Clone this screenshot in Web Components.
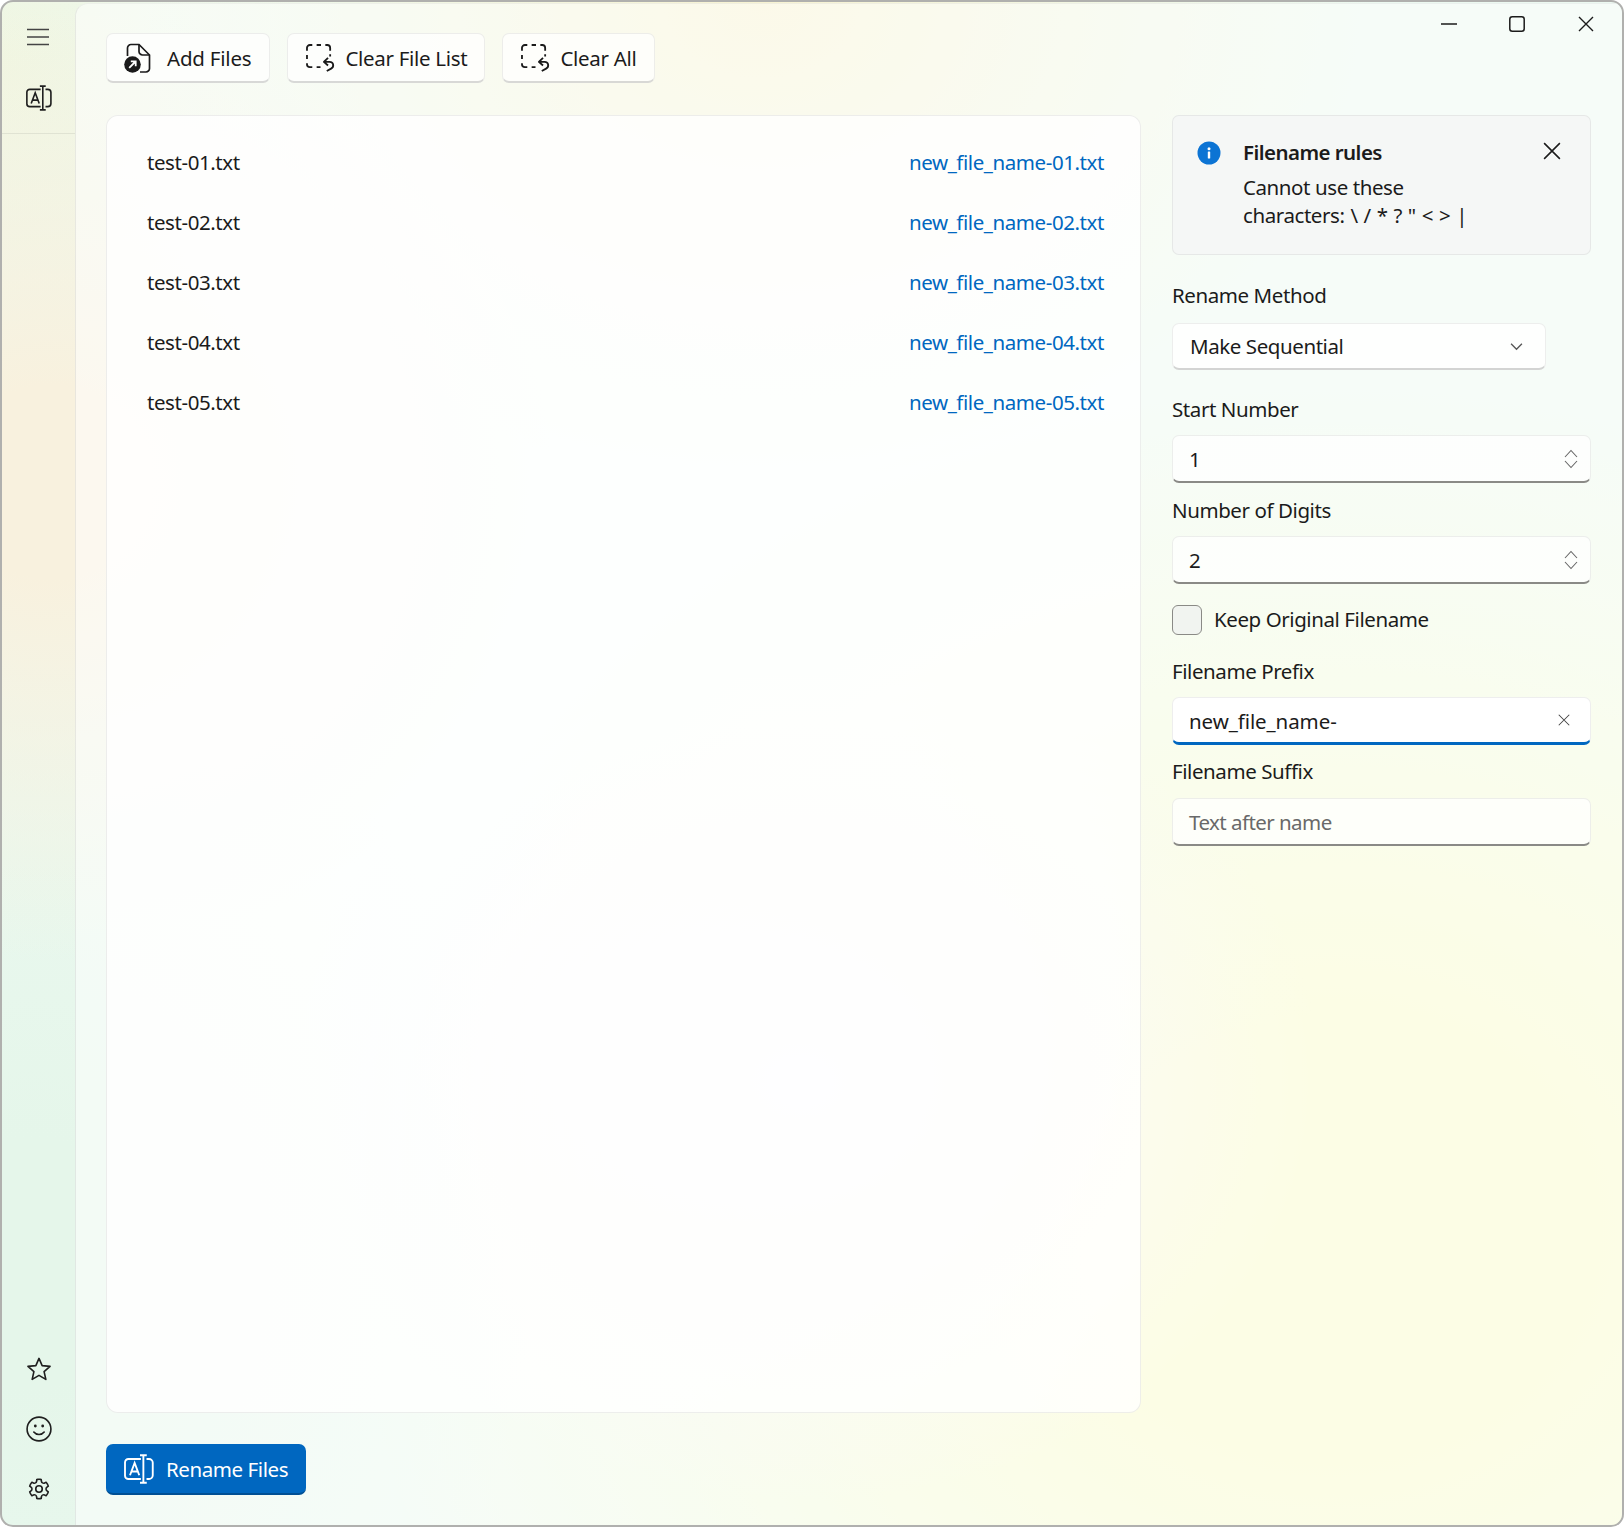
<!DOCTYPE html>
<html lang="en">
<head>
<meta charset="utf-8">
<title>File Renamer</title>
<style>
html,body{margin:0;padding:0;background:#fff;}
body{width:1624px;height:1527px;overflow:hidden;font-family:"Noto Sans","Open Sans",sans-serif;font-size:20.5px;color:#1b1b1b;letter-spacing:-.42px;white-space:nowrap;}
</style>
</head>
<body>
<app-window>
  <side-nav slot="nav">
    <nav-item icon="menu" slot="top" size="24"></nav-item>
    <nav-item icon="rename" slot="top" size="26" style="margin-left:1px"></nav-item>
    <nav-item icon="star" slot="bottom" size="26" style="margin-left:1px"></nav-item>
    <nav-item icon="smile" slot="bottom" size="26" style="margin-left:1px"></nav-item>
    <nav-item icon="gear" slot="bottom" size="26" style="margin-left:1px"></nav-item>
  </side-nav>
  <caption-buttons slot="caption"></caption-buttons>
  <tool-bar slot="toolbar">
    <action-button icon="addfile">Add Files</action-button>
    <action-button icon="clear">Clear File List</action-button>
    <action-button icon="clear">Clear All</action-button>
  </tool-bar>
  <file-list slot="list">
    <file-row><span>test-01.txt</span><span slot="new">new_file_name-01.txt</span></file-row>
    <file-row><span>test-02.txt</span><span slot="new">new_file_name-02.txt</span></file-row>
    <file-row><span>test-03.txt</span><span slot="new">new_file_name-03.txt</span></file-row>
    <file-row><span>test-04.txt</span><span slot="new">new_file_name-04.txt</span></file-row>
    <file-row><span>test-05.txt</span><span slot="new">new_file_name-05.txt</span></file-row>
  </file-list>
  <side-panel slot="panel">
    <info-bar>
      <span slot="title">Filename rules</span>
      <div>Cannot use these</div>
      <div style="word-spacing:1px">characters: \ / * ? " &lt; &gt; |</div>
    </info-bar>
    <form-field style="margin-top:28px;--gap:14px"><span slot="label">Rename Method</span>
      <combo-box>Make Sequential</combo-box></form-field>
    <form-field style="margin-top:27px;--gap:12px"><span slot="label">Start Number</span>
      <input-box kind="spin">1</input-box></form-field>
    <form-field style="margin-top:15px;--gap:12px"><span slot="label">Number of Digits</span>
      <input-box kind="spin">2</input-box></form-field>
    <check-box style="margin-top:21px">Keep Original Filename</check-box>
    <form-field style="margin-top:24px;--gap:12px"><span slot="label">Filename Prefix</span>
      <input-box kind="clear" focused>new_file_name-</input-box></form-field>
    <form-field style="margin-top:14px;--gap:13px"><span slot="label">Filename Suffix</span>
      <input-box placeholder>Text after name</input-box></form-field>
  </side-panel>
  <primary-button slot="footer">Rename Files</primary-button>
</app-window>
<script>
const ICONS={
menu:['0 0 24 24','<path d="M1 4.5H23M1 12H23M1 19.5H23" fill="none" stroke="#444" stroke-width="1.6"/>'],
rename:['0 0 24 24','<g fill="none" stroke="currentColor" stroke-width="1.5"><path d="M13.5 4H3.5a2.7 2.7 0 0 0-2.7 2.7V17.3A2.7 2.7 0 0 0 3.5 20H13.5"/><path d="M18 4H20a3 3 0 0 1 3 3V17a3 3 0 0 1-3 3H18"/><path d="M12.8 1H18.2M15.5 1V23M12.8 23H18.2"/><path d="M4.8 17L8.5 7.2L12.2 17M6.1 14H10.9"/></g>'],
star:['0 0 24 24','<path d="M12 2.2L14.9 8.9L22.2 9.6L16.7 14.4L18.3 21.6L12 17.9L5.7 21.6L7.3 14.4L1.800 9.6L9.100 8.900Z" fill="none" stroke="currentColor" stroke-width="1.5" stroke-linejoin="round"/>'],
smile:['0 0 24 24','<g fill="none" stroke="currentColor" stroke-width="1.5"><circle cx="12" cy="12" r="11"/><path d="M7.200 14.800C9.500 17.800 14.500 17.800 16.800 14.800" stroke-linecap="round"/></g><circle cx="8.600" cy="9.200" r="1.300" fill="currentColor"/><circle cx="15.400" cy="9.200" r="1.300" fill="currentColor"/>'],
gear:['0 0 24 24','<path fill="currentColor" d="M12.012 2.25c.734.008 1.465.093 2.182.253a.75.75 0 0 1 .582.649l.17 1.527a1.384 1.384 0 0 0 1.927 1.116l1.4-.615a.75.75 0 0 1 .85.174 9.793 9.793 0 0 1 2.205 3.792.75.75 0 0 1-.272.825l-1.241.916a1.38 1.38 0 0 0 0 2.226l1.243.915a.75.75 0 0 1 .272.826 9.798 9.798 0 0 1-2.204 3.792.75.75 0 0 1-.849.175l-1.406-.617a1.38 1.38 0 0 0-1.926 1.114l-.17 1.526a.75.75 0 0 1-.571.647 9.518 9.518 0 0 1-4.406 0 .75.75 0 0 1-.572-.647l-.169-1.524a1.382 1.382 0 0 0-1.925-1.11l-1.406.616a.75.75 0 0 1-.85-.175 9.798 9.798 0 0 1-2.203-3.796.75.75 0 0 1 .272-.826l1.243-.916a1.38 1.38 0 0 0 0-2.226l-1.243-.914a.75.75 0 0 1-.272-.826 9.793 9.793 0 0 1 2.205-3.792.75.75 0 0 1 .85-.174l1.4.615a1.387 1.387 0 0 0 1.93-1.118l.17-1.526a.75.75 0 0 1 .583-.65c.718-.159 1.45-.243 2.202-.252Zm0 1.5a9.135 9.135 0 0 0-1.355.117l-.109.977A2.886 2.886 0 0 1 6.525 7.17l-.898-.394a8.293 8.293 0 0 0-1.348 2.317l.798.587a2.881 2.881 0 0 1 0 4.643l-.799.588c.32.842.776 1.626 1.348 2.322l.905-.397a2.882 2.882 0 0 1 4.017 2.318l.11.984c.889.15 1.798.15 2.687 0l.11-.984a2.881 2.881 0 0 1 4.018-2.322l.905.396a8.296 8.296 0 0 0 1.347-2.318l-.798-.588a2.881 2.881 0 0 1 0-4.643l.796-.587a8.293 8.293 0 0 0-1.348-2.317l-.896.393a2.884 2.884 0 0 1-4.023-2.324l-.11-.976a8.988 8.988 0 0 0-1.333-.117ZM12 8.25a3.75 3.75 0 1 1 0 7.5 3.75 3.75 0 0 1 0-7.5Zm0 1.5a2.25 2.25 0 1 0 0 4.5 2.25 2.25 0 0 0 0-4.500Z"/>'],
addfile:['0 0 27 30','<path d="M3.500 13V5a3.500 3.500 0 0 1 3.500-3.500H15L25.500 12V25.500a3.500 3.500 0 0 1-3.500 3.500H16" fill="none" stroke="currentColor" stroke-width="1.7"/><path d="M15 1.500V8.500a3.500 3.500 0 0 0 3.500 3.500H25.500" fill="none" stroke="currentColor" stroke-width="1.7"/><circle cx="8.500" cy="21.500" r="8.300" fill="currentColor"/><path d="M5.200 24.800L11.500 18.500M6.800 18.300H11.700V23.200" fill="none" stroke="#fff" stroke-width="1.800"/>'],
clear:['0 0 30 29','<g fill="none" stroke="currentColor" stroke-width="1.900"><path d="M1 7V4a3 3 0 0 1 3-3H6.500M11 1H15.500M20 1H22a3 3 0 0 1 3 3V7M1 11.500V15.500M1 20V21a3 3 0 0 0 3 3H6.500M11 24H15M25 10.500V13"/><path d="M22.800 14.300L18.500 18.500L22.800 22.300M18.500 18.500H24.500C28.800 18.500 29.300 23.800 26 25.500L21.500 28" stroke-linejoin="round"/></g>'],
info:['0 0 24 24','<circle cx="12" cy="12" r="11.500" fill="#0c74d4"/><rect x="10.800" y="10.500" width="2.400" height="7" rx=".6" fill="#fff"/><circle cx="12" cy="7.800" r="1.500" fill="#fff"/>'],
x:['0 0 16 16','<path d="M1 1L15 15M15 1L1 15" fill="none" stroke="currentColor" stroke-width="1.400"/>'],
chev:['0 0 12 8','<path d="M1 1.500L6 6.500L11 1.500" fill="none" stroke="#555" stroke-width="1.200"/>'],
spin:['0 0 14 20','<path d="M1 8L7 1.500L13 8M1 12L7 18.500L13 12" fill="none" stroke="#666" stroke-width="1.100"/>']
};
function svg(name,w,h){const[v,b]=ICONS[name];return `<svg xmlns="http://www.w3.org/2000/svg" viewBox="${v}" width="${w}" height="${h||w}" style="display:block;flex:none">${b}</svg>`}
function comp(tag,build){customElements.define(tag,class extends HTMLElement{constructor(){super();this.attachShadow({mode:'open'})}connectedCallback(){this.shadowRoot.innerHTML=build(this)}})}

comp('app-window',()=>`<style>
:host{display:block;box-sizing:border-box;width:1624px;height:1527px;border:2.500px solid #b0b0ae;border-radius:13px;overflow:hidden;position:relative;
background:
 radial-gradient(520px 420px at 800px 1080px,#f6f2fa 0,rgba(246,242,250,0) 100%),
 radial-gradient(620px 480px at 760px 0px,#f8f3d2 0,rgba(248,243,210,0) 100%),
 radial-gradient(500px 480px at 50px 480px,#f8f1de 0,#f8f1de 20%,rgba(248,241,222,0) 100%),
 radial-gradient(300px 320px at 0px 60px,#f0f6e2 0,rgba(240,246,226,0) 100%),
 radial-gradient(500px 620px at 30px 1260px,#e5f6ea 0,#e5f6ea 20%,rgba(229,246,234,0) 100%),
 radial-gradient(1000px 860px at 1330px 1230px,#f9fbc8 0,#f9fbc8 25%,rgba(249,251,200,0) 100%),
 #ecf9f1;
display:grid;grid-template-columns:72.500px 1fr;}
.main{background:rgba(255,255,255,.52);border-left:1.500px solid rgba(0,0,0,.07);border-top:1.500px solid rgba(0,0,0,.04);border-top-left-radius:13px;
 padding:29px 30px 30px 30.500px;display:flex;flex-direction:column;min-height:0;box-sizing:border-box;position:relative;margin-top:1px}
.content{flex:1;display:grid;grid-template-columns:1035px 419px;column-gap:31px;margin-top:32px;min-height:0}
.footer{margin-top:31px;display:flex}
.cap{position:absolute;top:0;right:2px}
</style>
<slot name="nav"></slot>
<div class="main">
 <div class="cap"><slot name="caption"></slot></div>
 <slot name="toolbar"></slot>
 <div class="content"><slot name="list"></slot><slot name="panel"></slot></div>
 <div class="footer"><slot name="footer"></slot></div>
</div>`);

comp('side-nav',()=>`<style>
:host{display:flex;flex-direction:column;height:100%;color:#1f1f1f}
.top{display:flex;flex-direction:column;align-items:center;gap:36px;padding:22px 0 23px;border-bottom:1.500px solid rgba(0,0,0,.07)}
.sp{flex:1}
.bot{display:flex;flex-direction:column;align-items:center;gap:35px;padding-bottom:23.500px}
</style>
<div class="top"><slot name="top"></slot></div><div class="sp"></div><div class="bot"><slot name="bottom"></slot></div>`);

comp('nav-item',h=>`<style>:host{display:flex;align-items:center;justify-content:center;width:26px;height:25px}</style>${svg(h.getAttribute('icon'),+h.getAttribute('size'))}`);

comp('caption-buttons',()=>`<style>
:host{display:flex;color:#1b1b1b}
.b{width:68.500px;height:39px;display:flex;align-items:center;justify-content:center}
</style>
<div class="b"><svg width="16" height="16" viewBox="0 0 16 16"><path d="M0 8H16" stroke="currentColor" stroke-width="1.500"/></svg></div>
<div class="b"><svg width="16" height="16" viewBox="0 0 16 16"><rect x=".8" y=".8" width="14.400" height="14.400" rx="2.500" fill="none" stroke="currentColor" stroke-width="1.500"/></svg></div>
<div class="b">${svg('x',16)}</div>`);

comp('tool-bar',()=>`<style>:host{display:flex;gap:17px;height:50px}</style><slot></slot>`);

comp('action-button',h=>{const ic=h.getAttribute('icon');const add=ic==='addfile';return `<style>
:host{display:flex;align-items:center;box-sizing:border-box;height:50px;background:rgba(255,255,255,.72);border:1.500px solid rgba(0,0,0,.065);border-bottom:2.500px solid rgba(0,0,0,.15);border-radius:7px;padding:0 ${add?18:17}px 0 ${add?17:18}px;gap:${add?16:10}px;color:#1b1b1b;letter-spacing:${add?'-.2px':'-.3px'}}
</style>${add?svg('addfile',27,30):svg('clear',29,28)}<slot></slot>`});

comp('file-list',()=>`<style>
:host{display:block;box-sizing:border-box;background:rgba(255,255,255,.78);border:1.500px solid rgba(0,0,0,.065);border-radius:12px;padding:16px 36px 0 40px;min-height:0}
</style><slot></slot>`);

comp('file-row',()=>`<style>
:host{display:flex;justify-content:space-between;align-items:center;height:60px;color:#1b1b1b}
.n{color:#0067c0}
</style><div><slot></slot></div><div class="n"><slot name="new"></slot></div>`);

comp('side-panel',()=>`<style>:host{display:flex;flex-direction:column;min-height:0}</style><slot></slot>`);

comp('info-bar',()=>`<style>
:host{display:grid;grid-template-columns:24px 1fr 18px;column-gap:22px;box-sizing:border-box;height:140px;background:#f5f7f6;border:1.500px solid rgba(0,0,0,.06);border-radius:7px;padding:24px 27px 0 24px;line-height:28px}
.t{font-weight:600;line-height:24px;margin-bottom:9px;letter-spacing:-.55px}
.ic{padding-top:1px}
.x{padding-top:2px;margin-left:-2px}
</style><div class="ic">${svg('info',24)}</div>
<div><div class="t"><slot name="title"></slot></div><slot></slot></div>
<div class="x">${svg('x',18)}</div>`);

comp('form-field',()=>`<style>
:host{display:block}
.l{height:26px;line-height:24px;margin-bottom:var(--gap,12px)}
</style><div class="l"><slot name="label"></slot></div><slot></slot>`);

comp('combo-box',()=>`<style>
:host{display:flex;align-items:center;justify-content:space-between;box-sizing:border-box;width:374px;height:47px;background:rgba(255,255,255,.85);border:1.500px solid rgba(0,0,0,.065);border-bottom:2.500px solid rgba(0,0,0,.17);border-radius:7px;padding:0 22px 0 17px}
</style><div><slot></slot></div>${svg('chev',13,9)}`);

comp('input-box',h=>{const k=h.getAttribute('kind'),f=h.hasAttribute('focused'),p=h.hasAttribute('placeholder');return `<style>
:host{display:flex;align-items:center;justify-content:space-between;box-sizing:border-box;height:48px;background:rgba(255,255,255,${f?1:.75});border:1.500px solid rgba(0,0,0,.065);border-bottom:${f?'3px solid #0067c0':'2.500px solid #8a8a86'};border-radius:7px;padding:0 ${k==='clear'?20:12}px 0 16px;color:${p?'#696969':'#1b1b1b'};letter-spacing:${f?'-.08px':p?'-.55px':'-.4px'}}
</style><div${f?' style="padding-top:2px"':''}><slot></slot></div>${k==='spin'?svg('spin',14,20):k==='clear'?`<div style="color:#444">${svg('x',12)}</div>`:''}`});

comp('check-box',()=>`<style>
:host{display:flex;align-items:center;gap:12px;height:30px}
.b{box-sizing:border-box;width:30px;height:30px;border:1.500px solid #8a8a86;border-radius:6px;background:rgba(240,243,240,.9)}
.t{margin-top:-2px}
</style><div class="b"></div><div class="t"><slot></slot></div>`);

comp('primary-button',()=>`<style>
:host{display:flex;align-items:center;gap:12px;box-sizing:border-box;width:200px;height:51px;background:#0067c0;border-bottom:2.500px solid #004f94;border-radius:7px;padding:0 18px;color:#fff}
</style>${svg('rename',30)}<slot></slot>`);
</script>
</body>
</html>
